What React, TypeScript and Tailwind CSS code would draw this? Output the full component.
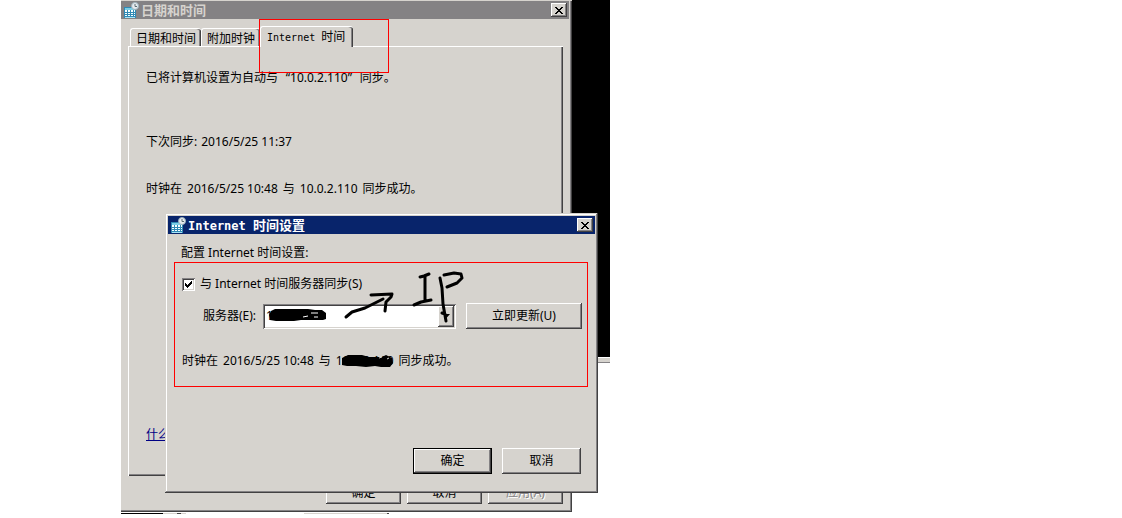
import type { ReactNode } from "react";
import clsx from "clsx";

const BUTTON =
  "bg-[#d6d3ce] text-center shadow-[inset_-1px_-1px_0_#424142,inset_1px_1px_0_#fff,inset_-2px_-2px_0_#848284]";

function CalendarIcon() {
  return (
    <svg className="h-4 w-4 shrink-0" viewBox="0 0 16 16" shapeRendering="crispEdges" aria-hidden="true">
      <rect x="1" y="5" width="12" height="11" fill="#318ab5" />
      <rect x="2" y="6" width="10" height="2" fill="#7bcfe7" />
      {[8, 11, 13].map((y) =>
        [2, 5, 8, 11].map((x) => (
          <rect key={`${x}-${y}`} x={x} y={y} width={x === 11 ? 1 : 2} height={y === 8 ? 2 : 1} fill="#f7ffff" />
        ))
      )}
      <rect x="2" y="15" width="10" height="1" fill="#a5e3f7" />
      <g shapeRendering="auto">
        <circle cx="12" cy="4" r="3.5" fill="#e7ebef" stroke="#9cb2bd" />
        <path d="M12 2v2.5h2" fill="none" stroke="#5a6d73" />
      </g>
    </svg>
  );
}

function CloseButton() {
  return (
    <button type="button" aria-label="关闭" className={clsx(BUTTON, "flex h-[14px] w-4 items-center justify-center")}>
      <svg className="h-[7px] w-2" viewBox="0 0 8 7" shapeRendering="crispEdges" aria-hidden="true">
        <path
          d="M0 0h2v1h1v1h2v-1h1v-1h2v1h-1v1h-1v1h-1v1h1v1h1v1h1v1h-2v-1h-1v-1h-2v1h-1v1h-2v-1h1v-1h1v-1h1v-1h-1v-1h-1v-1h-1z"
          fill="#000"
        />
      </svg>
    </button>
  );
}

function TitleBar({ active, children }: { active?: boolean; children: ReactNode }) {
  return (
    <div
      className={clsx(
        "flex h-[18px] items-center gap-[2px] pr-[2px] pl-[2px] text-[13px] leading-4 font-bold",
        active ? "bg-[#08246b] text-white" : "bg-[#848284] text-[#d6d3ce]"
      )}
    >
      <CalendarIcon />
      <h2 className="flex-1 whitespace-nowrap">{children}</h2>
      <CloseButton />
    </div>
  );
}

function Tab({ active, children }: { active?: boolean; children: ReactNode }) {
  return (
    <button
      type="button"
      role="tab"
      aria-selected={!!active}
      className={clsx(
        "rounded-t-[3px] border-t border-l border-white bg-[#d6d3ce] whitespace-nowrap shadow-[inset_-1px_0_0_#424142,inset_-2px_0_0_#848284]",
        active ? "relative -mb-px h-[21px] pr-2 pl-[6px]" : "h-[18px] px-[5px] pt-[2px]"
      )}
    >
      {children}
    </button>
  );
}

function SyncStatus() {
  return (
    <p className="flex gap-[5px] whitespace-nowrap">
      <span>时钟在</span>
      <span>2016/5/25 10:48</span>
      <span>与</span>
      <span>10.0.2.110</span>
      <span>同步成功。</span>
    </p>
  );
}

function DateTimeWindow() {
  return (
    <section className="absolute top-0 left-[121px] w-[451px] border-t border-[#d6d3ce] bg-[#d6d3ce] pb-2 shadow-[inset_-1px_-1px_0_#424142,inset_-2px_-2px_0_#848284]">
      <div className="mr-[3px]">
        <TitleBar>日期和时间</TitleBar>
      </div>
      <div className="mr-[9px] ml-[7px]">
        <div role="tablist" className="flex h-[27px] items-end pl-[2px]">
          <Tab>日期和时间</Tab>
          <Tab>附加时钟</Tab>
          <Tab active>
            <span className="font-['DejaVu_Sans_Mono',monospace] text-[10px]">Internet </span>时间
          </Tab>
        </div>
        <div className="border-t border-l border-white pt-[23px] pr-4 pb-[33px] pl-[17px] shadow-[inset_-1px_-1px_0_#424142,inset_-2px_-2px_0_#848284]">
          <p className="flex whitespace-nowrap">
            <span>已将计算机设置为自动与</span>
            <span className="w-3 text-right">“</span>
            <span>10.0.2.110</span>
            <span className="w-3">”</span>
            <span>同步。</span>
          </p>
          <p className="mt-12 flex gap-1">
            <span>下次同步:</span>
            <span>2016/5/25 11:37</span>
          </p>
          <div className="mt-[31px]">
            <SyncStatus />
          </div>
          <a href="#sync" className="mt-[230px] block w-fit text-[#000084] underline">
            什么是 Internet 时间同步?
          </a>
        </div>
        <div className="mt-[6px] flex justify-end gap-[6px]">
          <button type="button" className={clsx(BUTTON, "h-[22px] w-[75px]")}>确定</button>
          <button type="button" className={clsx(BUTTON, "h-[22px] w-[75px]")}>取消</button>
          <button
            type="button"
            disabled
            className={clsx(BUTTON, "h-[22px] w-[75px] text-[#848284] [text-shadow:1px_1px_0_#fff]")}
          >
            应用(A)
          </button>
        </div>
      </div>
    </section>
  );
}

function InternetTimeDialog() {
  return (
    <section className="absolute top-[213px] left-[165px] w-[433px] bg-[#d6d3ce] p-[3px] pb-[19px] shadow-[inset_-1px_-1px_0_#424142,inset_1px_1px_0_#d6d3ce,inset_-2px_-2px_0_#848284,inset_2px_2px_0_#fff]">
      <TitleBar active>
        <span className="font-['DejaVu_Sans_Mono',monospace] text-[12px]">Internet </span>时间设置
      </TitleBar>
      <div className="px-[13px]">
        <p className="pt-[11px]">配置 Internet 时间设置:</p>
        <label className="mt-[15px] ml-px flex items-center gap-[5px]">
          <span className="relative flex h-[13px] w-[13px]">
            <input
              type="checkbox"
              defaultChecked
              className="h-[13px] w-[13px] appearance-none bg-white shadow-[inset_1px_1px_0_#848284,inset_-1px_-1px_0_#fff,inset_2px_2px_0_#424142,inset_-2px_-2px_0_#d6d3ce]"
            />
            <svg
              className="pointer-events-none absolute top-[3px] left-[3px] h-[7px] w-[7px]"
              viewBox="0 0 7 7"
              shapeRendering="crispEdges"
              aria-hidden="true"
            >
              <path d="M0 2h1v1h1v1h1v-1h1v-1h1v-1h1v-1h1v3h-1v1h-1v1h-1v1h-1v1h-1v-1h-1v-1h-1z" fill="#000" />
            </svg>
          </span>
          与 Internet 时间服务器同步(S)
        </label>
        <div className="mt-[11px] flex items-center pl-[22px]">
          <label htmlFor="server" className="w-[60px] whitespace-nowrap">服务器(E):</label>
          <div className="relative w-[193px]">
            <select
              id="server"
              className="block h-[25px] w-full appearance-none bg-white pl-[3px] shadow-[inset_1px_1px_0_#848284,inset_-1px_-1px_0_#fff,inset_2px_2px_0_#424142,inset_-2px_-2px_0_#d6d3ce]"
            >
              <option>10.0.2.110</option>
            </select>
            <span
              className={clsx(
                BUTTON,
                "pointer-events-none absolute top-[2px] right-[2px] flex h-[21px] w-4 items-center justify-center"
              )}
            >
              <svg className="h-1 w-[7px]" viewBox="0 0 7 4" aria-hidden="true">
                <path d="M0 0h7L3.5 4z" fill="#000" />
              </svg>
            </span>
          </div>
          <button type="button" className={clsx(BUTTON, "ml-[10px] h-[26px] w-[116px]")}>立即更新(U)</button>
        </div>
        <div className="mt-6 ml-px">
          <SyncStatus />
        </div>
        <div className="mt-[79px] mr-px flex justify-end gap-[10px]">
          <button
            type="button"
            className="h-[26px] w-[79px] border border-black bg-[#d6d3ce] shadow-[inset_-1px_-1px_0_#424142,inset_1px_1px_0_#fff,inset_-2px_-2px_0_#848284]"
          >
            确定
          </button>
          <button type="button" className={clsx(BUTTON, "h-[26px] w-[79px]")}>取消</button>
        </div>
      </div>
    </section>
  );
}

/* Red frames and pen strokes drawn over both windows */
function Annotations() {
  return (
    <svg
      className="pointer-events-none absolute top-0 left-0 h-[518px] w-[620px]"
      viewBox="0 0 620 518"
      fill="none"
      aria-hidden="true"
    >
      <rect x="259.5" y="19.5" width="129" height="53" stroke="#f00" />
      <rect x="174.5" y="262.5" width="413" height="124" stroke="#f00" />
      <g stroke="#000" strokeWidth="3" strokeLinecap="round" strokeLinejoin="round">
        <path d="M346 317l6-5 13-4 18-9M371 295l21-1-1 3-5 5-1 9" />
        <path d="M420 277l4-1 5-2M425 276v24M414 305l7-3 10-2" />
        <path d="M440 278l2 10 1 16 3 17M442 313l3 1M444 275l10-2 7 1 1 4-5 5-10 4" />
      </g>
      <path
        d="M271 311l4-2h33l7 1 7 0 4 3v6l-3 1h-22l-7 1h-18l-6-1v-2l-1-3z"
        fill="#000"
      />
      <path d="M303 317l5-1M311 313l7 0M314 317l4 0" stroke="#fff" />
      <path
        d="M342 358l6-3h14l7 2h13l4-2 6 3 1 5-3 4h-9l-6-1-9 1-10-1h-9l-5-1z"
        fill="#000"
      />
      <path d="M379 358l3-1M387 359l2-1" stroke="#d6d3ce" />
    </svg>
  );
}

export default function App() {
  return (
    <main className="relative min-h-screen overflow-hidden bg-white font-['Noto_Sans','Noto_Sans_CJK_SC',sans-serif] text-[12px] leading-4 text-black">
      {/* Console window behind the dialogs */}
      <div className="absolute top-0 left-[560px] h-[363px] w-[50px] border-b border-[#848284] bg-[#d6d3ce]">
        <div className="h-[358px] border-b border-white bg-black" />
      </div>
      {/* Top edge of the taskbar */}
      <div className="absolute top-[513px] left-[121px] flex h-px w-[268px] bg-[#d6d3ce]">
        <div className="w-[42px] bg-black" />
        <div className="ml-[14px] w-1 bg-[#424142]" />
        <div className="ml-[5px] w-[118px] bg-white" />
        <div className="ml-auto w-[2px] bg-[#424142]" />
      </div>
      <DateTimeWindow />
      <InternetTimeDialog />
      <Annotations />
    </main>
  );
}
